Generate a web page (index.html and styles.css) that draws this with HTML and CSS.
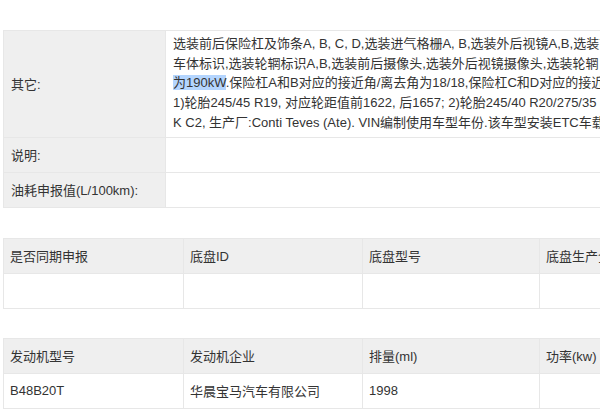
FILE: index.html
```html
<!DOCTYPE html>
<html lang="zh">
<head>
<meta charset="utf-8">
<link rel="stylesheet" href="styles.css">
</head>
<body>
<div class="page">
  <table class="info">
    <colgroup><col class="c-label"><col class="c-value"></colgroup>
    <tr class="tall">
      <th>其它:</th>
      <td class="multi">选装前后保险杠及饰条A, B, C, D,选装进气格栅A, B,选装外后视镜A,B,选装前后雾灯,选装<br>车体标识,选装轮辋标识A,B,选装前后摄像头,选装外后视镜摄像头,选装轮辋<br><span class="sel">为190kW</span>.保险杠A和B对应的接近角/离去角为18/18,保险杠C和D对应的接近角<br>1)轮胎245/45 R19, 对应轮距值前1622, 后1657; 2)轮胎245/40 R20/275/35 R20<br>K C2, 生产厂:Conti Teves (Ate). VIN编制使用车型年份.该车型安装ETC车载单元</td>
    </tr>
    <tr><th>说明:</th><td></td></tr>
    <tr><th>油耗申报值(L/100km):</th><td></td></tr>
  </table>

  <table class="grid">
    <colgroup><col class="g1"><col class="g2"><col class="g3"><col class="g4"></colgroup>
    <tr class="head"><td>是否同期申报</td><td>底盘ID</td><td>底盘型号</td><td>底盘生产企业</td></tr>
    <tr><td></td><td></td><td></td><td></td></tr>
  </table>

  <table class="grid last">
    <colgroup><col class="g1"><col class="g2"><col class="g3"><col class="g4"></colgroup>
    <tr class="head"><td>发动机型号</td><td>发动机企业</td><td>排量(ml)</td><td>功率(kw)</td></tr>
    <tr><td>B48B20T</td><td>华晨宝马汽车有限公司</td><td>1998</td><td></td></tr>
  </table>
</div>
</body>
</html>
```

FILE: styles.css
```css
html, body {
  margin: 0;
  padding: 0;
  overflow: hidden;
  background: #fff;
}
body {
  font-family: "Liberation Sans", "Noto Sans CJK SC", sans-serif;
  font-size: 13px;
  color: #333;
}
.page {
  padding: 30px 0 0 3px;
  width: 900px;
}
table {
  border-collapse: collapse;
  table-layout: fixed;
}
td, th {
  border: 1px solid #e7e7e7;
  padding: 0 6px;
  text-align: left;
  font-weight: normal;
  white-space: nowrap;
  overflow: hidden;
  vertical-align: middle;
}
.info {
  width: 900px;
  margin-bottom: 30px;
}
.c-label { width: 162px; }
.info th {
  background: #efefef;
  height: 34px;
  padding-left: 7px;
}
.info td { height: 34px; padding-left: 7px; }
.info tr.tall th, .info tr.tall td { height: 98px; }
.multi {
  line-height: 19.7px;
  padding-top: 3px;
  padding-bottom: 4px;
}
.sel { background: #b4d5fe; }
.grid {
  width: 716px;
  margin-bottom: 29px;
}
.grid.last { margin-bottom: 0; }
.g1 { width: 180px; }
.g2 { width: 179px; }
.g3 { width: 177px; }
.g4 { width: 180px; }
.grid td { height: 34px; }
.grid tr.head td { background: #efefef; }
```
